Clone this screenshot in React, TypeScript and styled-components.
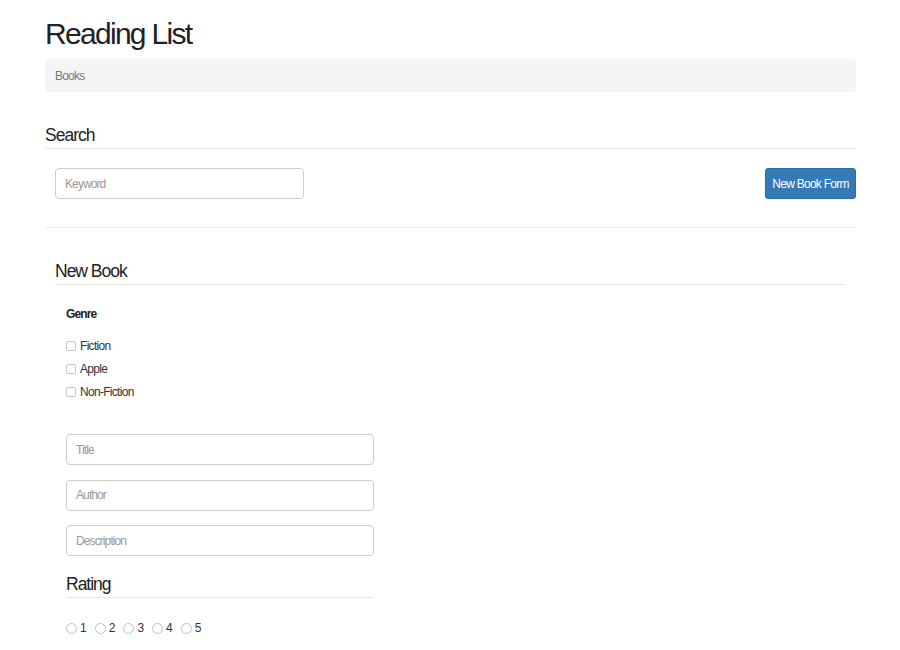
import React from "react";
import styled, { createGlobalStyle } from "styled-components";

const Global = createGlobalStyle`
  html, body { margin: 0; padding: 0; background: #fff; }
  body { font-family: "Liberation Sans", Arial, sans-serif; color: #333; }
  * { box-sizing: border-box; }
`;

const Page = styled.div`
  width: 811px;
  margin-left: 45px;
  padding-top: 17px;
`;

const Title = styled.h1`
  margin: 0;
  font-size: 30px;
  line-height: 34px;
  font-weight: 400;
  color: #222;
  letter-spacing: -1.7px;
`;

const Breadcrumb = styled.div`
  margin-top: 8px;
  height: 33px;
  background: #f5f5f5;
  border-radius: 4px;
  padding-left: 10px;
  display: flex;
  align-items: center;
  font-size: 12px;
  letter-spacing: -0.8px;
  color: #777;
`;

const SectionHeading = styled.h3<{ $top: number }>`
  margin: ${(p) => p.$top}px 0 0;
  font-size: 17.5px;
  line-height: 20px;
  font-weight: 400;
  color: #222;
  letter-spacing: -1px;
  padding-bottom: 3px;
  border-bottom: 1px solid #e6e6e6;
`;

const SearchRow = styled.div`
  margin-top: 19px;
  padding-left: 10px;
  display: flex;
  justify-content: space-between;
  align-items: center;
`;

const TextInput = styled.input<{ $w: number }>`
  width: ${(p) => p.$w}px;
  height: 31px;
  border: 1px solid #ccc;
  border-radius: 4px;
  padding: 0 9px;
  font-family: "Liberation Sans", Arial, sans-serif;
  font-size: 12px;
  letter-spacing: -0.9px;
  color: #555;
  outline: none;
  &::placeholder { color: #999; }
`;

const Button = styled.button`
  width: 91px;
  height: 31px;
  background: #337ab7;
  border: 1px solid #2e6da4;
  border-radius: 3px;
  color: #fff;
  font-family: "Liberation Sans", Arial, sans-serif;
  font-size: 12px;
  letter-spacing: -0.75px;
  padding: 0;
`;

const Rule = styled.hr`
  margin: 28px 0 0;
  border: 0;
  border-top: 1px solid #eee;
`;

const NewBook = styled.section`
  padding: 0 11px 0 10px;
`;

const Inner = styled.div`
  padding-left: 11px;
`;

const Label = styled.div`
  margin-top: 21px;
  font-size: 12px;
  line-height: 16px;
  font-weight: 700;
  letter-spacing: -0.9px;
  color: #222;
`;

const Checks = styled.div`
  margin-top: 12px;
  display: flex;
  flex-direction: column;
`;

const CheckRow = styled.label`
  height: 23px;
  display: flex;
  align-items: center;
  font-size: 12px;
  letter-spacing: -0.7px;
  color: #333;
`;

const Box = styled.span`
  width: 10px;
  height: 10px;
  border: 1px solid #c8c8c8;
  border-radius: 2px;
  background: #fff;
  margin-right: 4px;
`;

const Fields = styled.div`
  margin-top: 31px;
  width: 308px;
  display: flex;
  flex-direction: column;
  gap: 14.5px;
`;

const RatingWrap = styled.div`
  width: 308px;
`;

const Radios = styled.div`
  margin-top: 23px;
  display: flex;
  align-items: center;
  gap: 8px;
  font-size: 12px;
  color: #333;
`;

const RadioItem = styled.label`
  display: flex;
  align-items: center;
  gap: 3px;
`;

const Circle = styled.span`
  width: 11px;
  height: 11px;
  border: 1px solid #c0c0c0;
  border-radius: 50%;
  background: #fff;
`;

export default function App() {
  return (
    <>
      <Global />
      <Page>
        <Title>Reading List</Title>
        <Breadcrumb>Books</Breadcrumb>
        <SectionHeading $top={33}>Search</SectionHeading>
        <SearchRow>
          <TextInput $w={249} placeholder="Keyword" />
          <Button>New Book Form</Button>
        </SearchRow>
        <Rule />
        <NewBook>
          <SectionHeading $top={33}>New Book</SectionHeading>
          <Inner>
            <Label>Genre</Label>
            <Checks>
              {["Fiction", "Apple", "Non-Fiction"].map((g) => (
                <CheckRow key={g}>
                  <Box />
                  {g}
                </CheckRow>
              ))}
            </Checks>
            <Fields>
              <TextInput $w={308} placeholder="Title" />
              <TextInput $w={308} placeholder="Author" />
              <TextInput $w={308} placeholder="Description" />
            </Fields>
            <RatingWrap>
              <SectionHeading $top={18}>Rating</SectionHeading>
            </RatingWrap>
            <Radios>
              {[1, 2, 3, 4, 5].map((n) => (
                <RadioItem key={n}>
                  <Circle />
                  {n}
                </RadioItem>
              ))}
            </Radios>
          </Inner>
        </NewBook>
      </Page>
    </>
  );
}
